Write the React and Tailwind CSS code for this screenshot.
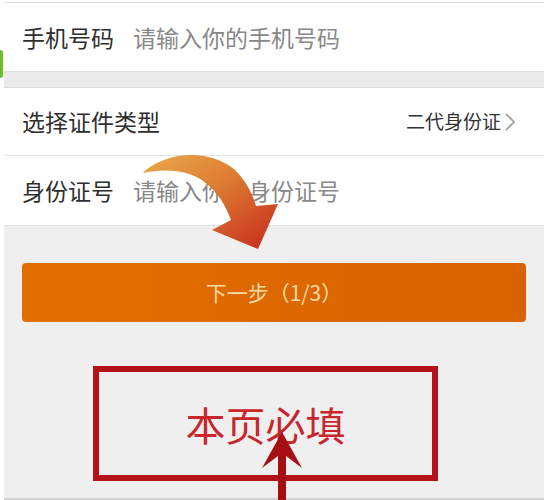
import React from 'react'

const font = { fontFamily: '"Noto Sans CJK SC", "Noto Sans", sans-serif' }

function Row({ label, placeholder, value, className = '' }) {
  return (
    <div className={`flex items-center bg-white pl-[18px] pr-[28px] ${className}`}>
      <span className="text-[23px] text-[#2e2e2e]">{label}</span>
      {placeholder && <span className="ml-[19px] text-[23px] text-[#888]">{placeholder}</span>}
      {value && (
        <span className="ml-auto flex items-center text-[19px] text-[#333]">
          {value}
          <svg width="12" height="22" viewBox="0 0 12 22" className="ml-[3px]">
            <path d="M2 3 L10 11 L2 19" fill="none" stroke="#9a9a9a" strokeWidth="1.6" />
          </svg>
        </span>
      )}
    </div>
  )
}

function CurvedArrow() {
  return (
    <svg
      className="pointer-events-none absolute left-[136px] top-[145px]"
      width="150"
      height="110"
      viewBox="136 145 150 110"
    >
      <defs>
        <linearGradient id="ga" x1="0" y1="0" x2="1" y2="1">
          <stop offset="0" stopColor="#e9aa4a" />
          <stop offset="0.45" stopColor="#dd7b32" />
          <stop offset="1" stopColor="#c5281c" />
        </linearGradient>
      </defs>
      <path
        d="M143 173 C 160 155, 205 145, 235 170 C 245 180, 252 192, 256 206 L 278 204 L 258 249 L 212 230 L 231 220 C 224 200, 210 182, 192 175 C 175 169, 158 170, 143 173 Z"
        fill="url(#ga)"
      />
    </svg>
  )
}

export default function App() {
  return (
    <div className="relative h-[500px] w-[548px] overflow-hidden bg-white px-[4px]" style={font}>
      <div className="absolute left-0 top-[50px] h-[28px] w-[3px] rounded-r bg-[#6cbf2a]" />
      <div className="flex h-full flex-col bg-[#efefef]">
        <div className="h-[2px] bg-white" />
        <div className="h-[1px] bg-[#dcdcdc]" />
        <Row label="手机号码" placeholder="请输入你的手机号码" className="h-[68px]" />
        <div className="h-[17px] border-y border-[#dedede] bg-[#ebebeb]" />
        <Row label="选择证件类型" value="二代身份证" className="h-[67px]" />
        <div className="h-[1px] bg-[#e4e4e4]" />
        <Row label="身份证号" placeholder="请输入你的身份证号" className="h-[69px]" />
        <div className="h-[1px] bg-[#e2e2e2]" />

        <div className="flex flex-1 flex-col pt-[37px]">
          <button className="mx-[18px] flex h-[59px] items-center justify-center rounded-[4px] bg-gradient-to-r from-[#e36e00] to-[#d86300] text-[21px] text-[#f4dba6]">
            下一步（1/3）
          </button>
          <div className="relative ml-[89px] mt-[44px] flex h-[115px] w-[345px] items-center justify-center border-[6px] border-[#b3121a]">
            <span className="text-[40px] leading-none text-[#c8262b]">本页必填</span>
            <svg
              className="absolute left-[163px] top-[58px]"
              width="44"
              height="80"
              viewBox="0 0 44 80"
            >
              <path d="M20 2 L40 38 L24 26 L24 80 L16 80 L16 26 L0 38 Z" fill="#a50f14" />
            </svg>
          </div>
          <div className="mt-auto h-[2px] bg-[#d2d2d2]" />
        </div>
      </div>
      <CurvedArrow />
    </div>
  )
}
